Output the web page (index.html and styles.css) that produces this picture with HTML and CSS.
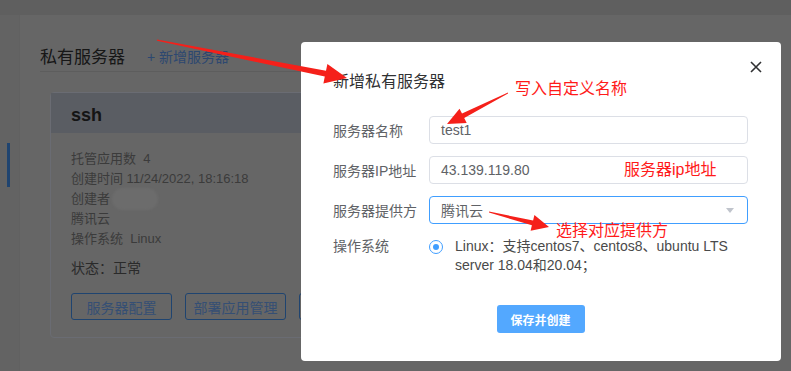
FILE: index.html
```html
<!DOCTYPE html>
<html lang="zh-CN">
<head>
    <meta charset="UTF-8">
    <meta name="viewport" content="width=device-width, initial-scale=1.0">
    <title>私有服务器</title>
    <link rel="stylesheet" href="styles.css">
</head>
<body>
    <div class="topbar"></div>
    <div class="layout">
        <aside class="sidebar">
            <div class="nav-mark"></div>
        </aside>
        <main class="main">
            <div class="page-head">
                <h2>私有服务器</h2>
                <a class="add-link">+ 新增服务器</a>
            </div>

            <div class="card">
                <div class="card-head">ssh</div>
                <div class="card-body">
                    <div class="info">托管应用数&nbsp; 4</div>
                    <div class="info">创建时间 11/24/2022, 18:16:18</div>
                    <div class="info">创建者 <span class="blur"></span></div>
                    <div class="info">腾讯云</div>
                    <div class="info">操作系统&nbsp; Linux</div>
                    <div class="status">状态：正常</div>
                    <div class="card-actions">
                        <button class="plain-btn">服务器配置</button>
                        <button class="plain-btn">部署应用管理</button>
                        <button class="plain-btn">删除</button>
                    </div>
                </div>
            </div>
        </main>
    </div>

    <!-- dialog -->
    <div class="mask"></div>
    <div class="dialog">
        <div class="dialog-head">
            <span class="dialog-title">新增私有服务器</span>
            <button class="close-btn" aria-label="关闭">
                <svg width="12" height="12" viewBox="0 0 12 12"><path d="M1 1L11 11M11 1L1 11" stroke="#303133" stroke-width="1.6" fill="none"/></svg>
            </button>
        </div>
        <div class="form">
            <div class="form-row">
                <label>服务器名称</label>
                <div class="input">test1</div>
            </div>
            <div class="form-row">
                <label>服务器IP地址</label>
                <div class="input">43.139.119.80</div>
            </div>
            <div class="form-row">
                <label>服务器提供方</label>
                <div class="input select">
                    <span>腾讯云</span>
                    <span class="caret"></span>
                </div>
            </div>
            <div class="form-row os-row">
                <label>操作系统</label>
                <div class="radio">
                    <span class="radio-dot"></span>
                    <span class="radio-text">Linux：支持centos7、centos8、ubuntu LTS server 18.04和20.04；</span>
                </div>
            </div>
        </div>
        <div class="dialog-foot">
            <button class="primary-btn">保存并创建</button>
        </div>
    </div>

    <!-- screenshot annotations -->
    <svg class="arrows" width="791" height="371" viewBox="0 0 791 371">
        <polygon fill="#f5201a" points="157,39.4 326,70.8 327.4,63.9 347,78 323.4,83.5 324.8,76.6 157,40.8"/>
        <polygon fill="#f5201a" points="508,92.6 462,113.6 459.5,108.7 447,124 466.7,122.9 464.2,118 508,93.6"/>
        <polygon fill="#f5201a" points="489,211.5 533.1,220.5 534.4,215.1 549,227 530.6,230.7 531.9,225.3 489,212.5"/>
    </svg>
    <div class="note note-name">写入自定义名称</div>
    <div class="note note-ip">服务器ip地址</div>
    <div class="note note-provider">选择对应提供方</div>
</body>
</html>
```

FILE: styles.css
```css
body {
    margin: 0;
    background-color: #cccccc;
    font-family: "Liberation Sans", "Noto Sans CJK SC", sans-serif;
    font-size: 14px;
    overflow: hidden;
}

.topbar {
    height: 15px;
    background-color: #bfbfbf;
}

.layout {
    display: flex;
    height: 356px;
}

.sidebar {
    width: 20px;
    background-color: #c6c6c6;
    border-right: 1px solid #c2c2c2;
    box-sizing: border-box;
}

.nav-mark {
    width: 3px;
    height: 44px;
    margin: 128px 0 0 7px;
    background-color: #3e88e0;
}

.main {
    flex: 1;
    padding: 25px 0 0 20px;
}

.page-head {
    display: flex;
    align-items: center;
    gap: 22px;
    height: 31px;
    width: 600px;
    border-bottom: 1px solid #bababa;
}

.page-head h2 {
    margin: 0;
    font-size: 17px;
    font-weight: normal;
    color: #2e2e2e;
}

.add-link {
    color: #5a90e0;
    font-size: 14px;
}

.card {
    width: 290px;
    margin: 20px 0 0 10px;
    border: 1px solid #d4d9e6;
    border-radius: 4px;
}

.card-head {
    height: 40px;
    line-height: 44px;
    padding-left: 20px;
    background-color: #b4bac6;
    font-size: 18px;
    font-weight: bold;
    color: #2a2a2a;
}

.card-body {
    padding: 16px 20px 17px;
    font-size: 13px;
    color: #777;
}

.info {
    line-height: 20px;
    height: 20px;
    display: flex;
    align-items: center;
    gap: 2px;
}

.blur {
    display: inline-block;
    width: 46px;
    height: 22px;
    border-radius: 11px;
    background-color: #d8d8d8;
    filter: blur(1px);
}

.status {
    margin-top: 9px;
    line-height: 20px;
    font-size: 14px;
    color: #555;
}

.card-actions {
    display: flex;
    gap: 13px;
    margin-top: 15px;
}

.plain-btn {
    flex: none;
    width: 101px;
    height: 27px;
    border: 1px solid #3e88e0;
    border-radius: 3px;
    background-color: transparent;
    color: #6a9ee8;
    font-family: inherit;
    font-size: 14px;
    padding: 0;
}

/* dialog */
.mask {
    position: fixed;
    inset: 0;
    background-color: rgba(0, 0, 0, 0.5);
}

.dialog {
    position: fixed;
    left: 301px;
    top: 42px;
    width: 480px;
    height: 319px;
    box-sizing: border-box;
    padding: 30px 33px 0 32px;
    background-color: #fff;
    border-radius: 4px;
}

.dialog-head {
    height: 20px;
    margin-bottom: 24px;
}

.dialog-title {
    font-size: 16px;
    line-height: 20px;
    color: #303133;
}

.close-btn {
    position: absolute;
    top: 19px;
    right: 19px;
    width: 12px;
    height: 12px;
    padding: 0;
    border: none;
    background: none;
    display: flex;
}

.form-row {
    display: flex;
    align-items: center;
    margin-bottom: 12px;
}

.form-row label {
    width: 96px;
    flex: none;
    color: #606266;
}

.input {
    flex: 1;
    height: 28px;
    box-sizing: border-box;
    padding: 0 11px;
    border: 1px solid #dcdfe6;
    border-radius: 4px;
    display: flex;
    align-items: center;
    color: #606266;
}

.select {
    border-color: #409eff;
    justify-content: space-between;
}

.caret {
    width: 0;
    height: 0;
    margin-right: 2px;
    border-left: 4px solid transparent;
    border-right: 4px solid transparent;
    border-top: 5px solid #c0c4cc;
}

.os-row {
    align-items: flex-start;
    line-height: 19px;
    margin-top: 13px;
}

.radio {
    flex: 1;
    display: flex;
    gap: 12px;
    color: #4a4a4a;
}

.radio-dot {
    flex: none;
    width: 14px;
    height: 14px;
    margin-top: 3px;
    box-sizing: border-box;
    border: 1px solid #409eff;
    border-radius: 50%;
    display: flex;
    align-items: center;
    justify-content: center;
}

.radio-dot::after {
    content: "";
    width: 6px;
    height: 6px;
    border-radius: 50%;
    background-color: #409eff;
}

.radio-text {
    flex: 1;
}

.dialog-foot {
    display: flex;
    justify-content: center;
    margin-top: 30px;
}

.primary-btn {
    width: 88px;
    height: 28px;
    border: none;
    border-radius: 3px;
    background-color: #53a8ff;
    color: #fff;
    font-family: inherit;
    font-size: 12px;
    font-weight: bold;
}

/* annotations drawn over the screenshot */
.arrows {
    position: fixed;
    left: 0;
    top: 0;
}

.note {
    position: fixed;
    color: #ff1a1a;
    font-size: 16px;
    line-height: 20px;
}

.note-name {
    left: 515px;
    top: 79px;
}

.note-ip {
    left: 624px;
    top: 160px;
}

.note-provider {
    left: 556px;
    top: 225px;
    line-height: 12px;
}
```
